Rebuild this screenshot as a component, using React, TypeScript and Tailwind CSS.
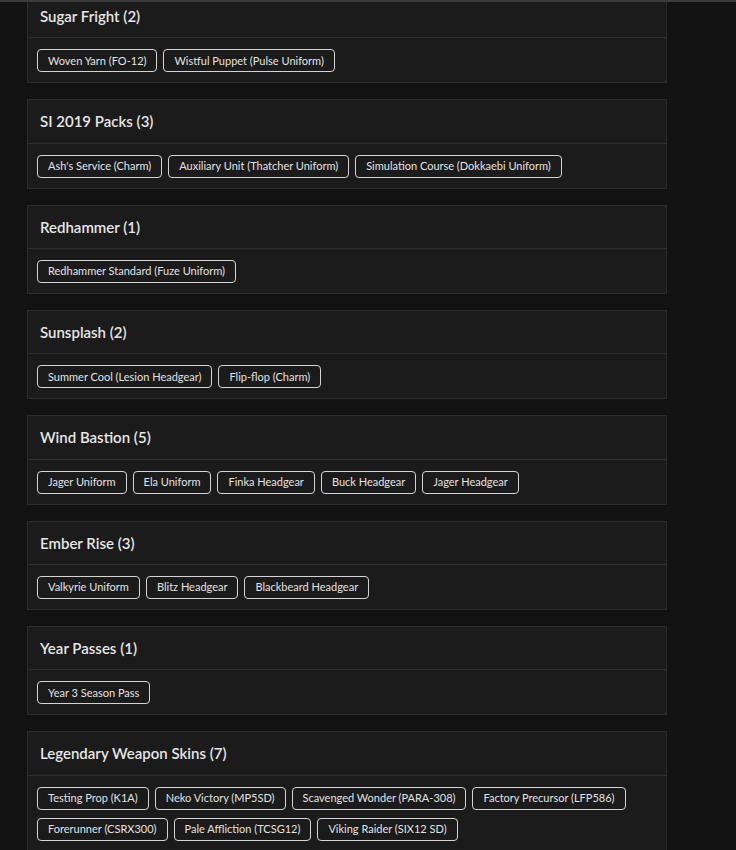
import React from "react";

interface Pack {
  title: string;
  items: string[];
}

const packs: Pack[] = [
  { title: "Sugar Fright", items: ["Woven Yarn (FO-12)", "Wistful Puppet (Pulse Uniform)"] },
  {
    title: "SI 2019 Packs",
    items: ["Ash's Service (Charm)", "Auxiliary Unit (Thatcher Uniform)", "Simulation Course (Dokkaebi Uniform)"],
  },
  { title: "Redhammer", items: ["Redhammer Standard (Fuze Uniform)"] },
  { title: "Sunsplash", items: ["Summer Cool (Lesion Headgear)", "Flip-flop (Charm)"] },
  {
    title: "Wind Bastion",
    items: ["Jager Uniform", "Ela Uniform", "Finka Headgear", "Buck Headgear", "Jager Headgear"],
  },
  { title: "Ember Rise", items: ["Valkyrie Uniform", "Blitz Headgear", "Blackbeard Headgear"] },
  { title: "Year Passes", items: ["Year 3 Season Pass"] },
  {
    title: "Legendary Weapon Skins",
    items: [
      "Testing Prop (K1A)",
      "Neko Victory (MP5SD)",
      "Scavenged Wonder (PARA-308)",
      "Factory Precursor (LFP586)",
      "Forerunner (CSRX300)",
      "Pale Affliction (TCSG12)",
      "Viking Raider (SIX12 SD)",
    ],
  },
];

const PackCard: React.FC<{ pack: Pack }> = ({ pack }) => (
  <div className="mb-4 border border-[#2b2b2b] bg-[#1b1b1b]">
    <div className="flex h-[43.33px] items-center border-b border-[#2e2e2e] px-3">
      <h2 className="text-[15px] font-semibold text-[#e6e6e6]">
        {pack.title} ({pack.items.length})
      </h2>
    </div>
    <div className="flex flex-wrap gap-x-[6px] gap-y-2 px-[9px] pt-[11px] pb-[10px]">
      {pack.items.map((item) => (
        <span
          key={item}
          className="flex h-[23px] items-center rounded-[4px] border border-[#d4d4d4] px-[10px] text-[11px] text-[#e2e2e2]"
        >
          {item}
        </span>
      ))}
    </div>
  </div>
);

export default function App() {
  return (
    <div
      className="h-[850px] overflow-hidden border-t-2 border-[#3a3a3a] bg-[#121212]"
      style={{ fontFamily: "Lato, sans-serif" }}
    >
      <div className="-mt-[8px] w-[667px] pl-[27px]">
        {packs.map((pack) => (
          <PackCard key={pack.title} pack={pack} />
        ))}
      </div>
    </div>
  );
}
